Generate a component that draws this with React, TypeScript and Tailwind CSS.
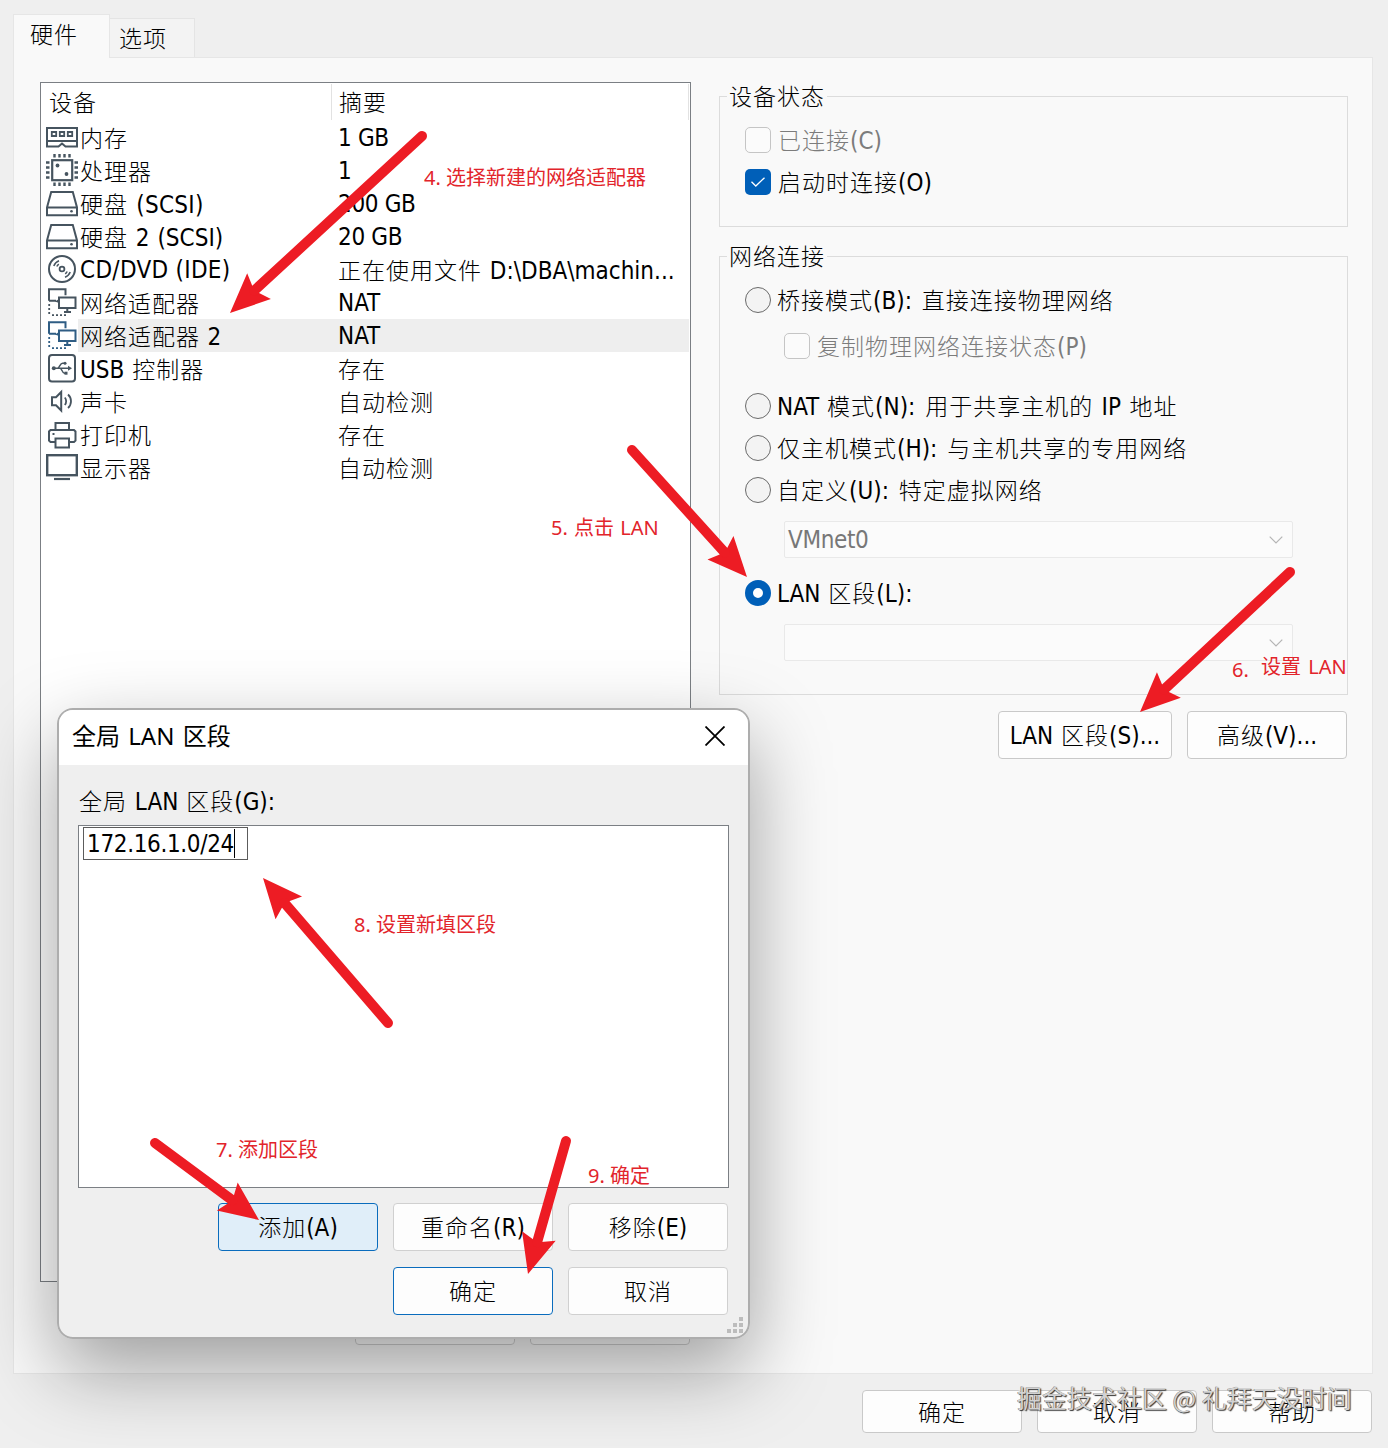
/* Hardware tab of the VM settings window, with the "global LAN segments"
   dialog open on top and the numbered tutorial arrows over everything. */

import type { ReactNode } from "react";
import clsx from "clsx";

// Latin runs: a serifed capital I is wide and digits are narrow in the system UI face
function tracking(run: string) {
  const digit = /\d/.test(run);
  const capI = /I/.test(run);
  if (capI && !digit) return "tracking-[0.3px]";
  if (digit && !capI) return "tracking-[-0.35px]";
  return "tracking-normal";
}

// spaces next to CJK are wider, most of all after a colon
function spacing(run: string) {
  return /: $/.test(run) ? "[word-spacing:3px]" : "[word-spacing:1px]";
}

/** UI label: CJK and Latin runs use different faces, so each run gets its own span. */
function T({ children, className }: { children: string; className?: string }) {
  const runs = children.split(/([\u4e00-\u9fff]+)/).filter(Boolean);
  return (
    <span className={clsx("inline-block pt-[2px] whitespace-pre", className)}>
      {runs.map((r, i) =>
        /[\u4e00-\u9fff]/.test(r) ? (
          <span key={i} className="font-['Noto_Sans_CJK_SC',sans-serif] text-[23px] font-light tracking-[1px]">{r}</span>
        ) : (
          <span key={i} className={clsx("font-['DejaVu_Sans_Condensed','DejaVu_Sans',sans-serif] text-[24px]", tracking(r), runs.length > 1 && spacing(r))}>{r}</span>
        )
      )}
    </span>
  );
}

/* ---------- device icons, 32x33 so they fill a row ---------- */

function Glyph({ children, className = "text-[#46545f]" }: { children: ReactNode; className?: string }) {
  return (
    <svg viewBox="0 0 32 33" className={clsx("h-[33px] w-8 shrink-0", className)} fill="none" stroke="currentColor" strokeWidth="2">
      {children}
    </svg>
  );
}

const MemoryIcon = () => (
  <Glyph>
    <path d="M1 7h30v18.500H19.500l-3.500-3-3.500 3H1zM1 20h30" />
    <path d="M5.800 11h4.400v4H5.800zM13.800 11h4.400v4h-4.400zM21.800 11h4.400v4h-4.400z" strokeWidth="1.800" />
  </Glyph>
);

const CpuIcon = () => (
  <Glyph>
    <rect x="6.200" y="6.200" width="20" height="20" strokeWidth="2.200" />
    <path d="M8.500 0v3.500M13.500 0v3.500M18.500 0v3.500M23.500 0v3.500M8.500 28.500V32M13.500 28.500V32M18.500 28.500V32M23.500 28.500V32M0 8.500h3.500M0 13.500h3.500M0 18.500h3.500M0 23.500h3.500M28.500 8.500H32M28.500 13.500H32M28.500 18.500H32M28.500 23.500H32" strokeWidth="2.400" />
    <g fill="currentColor" stroke="none"><circle cx="11.500" cy="11.500" r="1.900" /><circle cx="20.500" cy="20" r="1.900" /></g>
  </Glyph>
);

const DiskIcon = () => (
  <Glyph>
    <path d="M1 20.500 5.200 5h21.600L31 20.500v7.700H1zM1 20.500h30" />
    <circle cx="25.500" cy="24.200" r="1.300" fill="currentColor" stroke="none" />
  </Glyph>
);

const DiscIcon = () => (
  <Glyph>
    <circle cx="16" cy="16" r="13" />
    <circle cx="16" cy="16" r="2.400" strokeWidth="1.800" />
    <path d="M7.800 13a9 9 0 0 1 5.200-5.200M10.800 13.500a6 6 0 0 1 2-2.300M24.200 19a9 9 0 0 1-5.200 5.200M21.200 18.500a6 6 0 0 1-2 2.300" strokeWidth="1.500" />
  </Glyph>
);

const NetIcon = ({ selected = false }: { selected?: boolean }) => (
  <Glyph className={selected ? "text-[#2f5d84]" : undefined}>
    <path d="M3 14.800V3.200h16.500v6M3 14.800h7" />
    <rect x="13" y="11.500" width="16.500" height="10.500" />
    <path d="M21.300 22v4M18 26h7" />
    <path d="M9 15.500l4-2.500v4z" fill="currentColor" stroke="none" />
    <path d="M3.200 18v12M6 29.200h15" strokeDasharray="2 2" strokeWidth="1.800" />
  </Glyph>
);

const UsbIcon = () => (
  <Glyph>
    <rect x="3" y="3" width="26" height="26.500" rx="3" />
    <path d="M8 16.200h15M11.500 16.200c2 0 2.500-5 5-5h1.500M14 16.200c2 0 2 5 4.500 5h1" strokeWidth="1.500" />
    <g fill="currentColor" stroke="none"><circle cx="7.800" cy="16.200" r="2" /><path d="M22 13.700l4 2.500-4 2.500z" /><circle cx="19" cy="11.200" r="1.500" /><path d="M18.500 19.700h3v3h-3z" /></g>
  </Glyph>
);

const SoundIcon = () => (
  <Glyph>
    <path d="M6 12.200h4l5.200-5.200v18.500L10 20.300H6z" />
    <path d="M18.800 12.500c1.800 2 1.800 5.500 0 7.500M22 9.500c4 3.500 4 10 0 13.500" strokeWidth="1.800" />
  </Glyph>
);

const PrinterIcon = () => (
  <Glyph>
    <path d="M9.500 12V5h13.500v7M9 24H4.500L3 22.500v-9L4.500 12h23.500L29.500 13.500v9L28 24h-4.500" />
    <rect x="9.500" y="20.500" width="13.500" height="9" />
    <path d="M6.500 16h2" />
  </Glyph>
);

const DisplayIcon = () => (
  <Glyph>
    <rect x="1.200" y="4.200" width="29.600" height="20" strokeWidth="2.400" />
    <path d="M8 28h16" strokeWidth="2.200" />
  </Glyph>
);

const devices = [
  { icon: <MemoryIcon />, name: "内存", summary: "1 GB" },
  { icon: <CpuIcon />, name: "处理器", summary: "1" },
  { icon: <DiskIcon />, name: "硬盘 (SCSI)", summary: "200 GB" },
  { icon: <DiskIcon />, name: "硬盘 2 (SCSI)", summary: "20 GB" },
  { icon: <DiscIcon />, name: "CD/DVD (IDE)", summary: "正在使用文件 D:\\DBA\\machin..." },
  { icon: <NetIcon />, name: "网络适配器", summary: "NAT" },
  { icon: <NetIcon selected />, name: "网络适配器 2", summary: "NAT", active: true },
  { icon: <UsbIcon />, name: "USB 控制器", summary: "存在" },
  { icon: <SoundIcon />, name: "声卡", summary: "自动检测" },
  { icon: <PrinterIcon />, name: "打印机", summary: "存在" },
  { icon: <DisplayIcon />, name: "显示器", summary: "自动检测" },
];

/* ---------- form controls ---------- */

function Button({ children, className = "w-40 h-12 border-[#d0d0d0] bg-[#fdfdfd]" }: { children: string; className?: string }) {
  return (
    <button className={clsx("flex shrink-0 items-center justify-center rounded-[4px] border leading-6", className)}>
      <T>{children}</T>
    </button>
  );
}

function Check({ label, checked = false, className }: { label: string; checked?: boolean; className?: string }) {
  return (
    <label className={clsx("flex h-[42px] items-center", className)}>
      <span className={clsx("grid size-[26px] place-items-center rounded-[5px]", checked ? "bg-[#005fb8]" : "border-[1.5px] border-[#c5c5c5] bg-[#fbfbfb]")}>
        {checked && (
          <svg viewBox="0 0 14 10" className="h-[10px] w-[14px]" fill="none" stroke="#fff" strokeWidth="1.300"><path d="M.5 4.800 4.800 9 13.500.700" /></svg>
        )}
      </span>
      <T className={clsx("ml-[7px] leading-6", !checked && "text-[#7c7c7c]")}>{label}</T>
    </label>
  );
}

function Radio({ label, on = false }: { label: string; on?: boolean }) {
  return (
    <label className="flex h-[42px] items-center">
      <span className={clsx("size-[26px] rounded-full", on ? "border-8 border-[#005fb8] bg-white" : "border-[1.5px] border-[#6a6a6a] bg-[#f3f3f3]")} />
      <T className="ml-[6px] leading-6">{label}</T>
    </label>
  );
}

function Select({ value = "", className }: { value?: string; className?: string }) {
  return (
    <div className={clsx("ml-[39px] flex h-[37px] w-[509px] items-center justify-between rounded-[2px] border border-[#e9e9e9] bg-[#fbfbfb] pr-[9px] pl-[3px] text-[#777]", className)}>
      <T className="leading-6">{value}</T>
      <svg viewBox="0 0 14 8" className="h-2 w-[14px]" fill="none" stroke="#b5b5b5" strokeWidth="1.200"><path d="M.7.700 7 7 13.300.700" /></svg>
    </div>
  );
}

function Group({ title, children, className }: { title: string; children: ReactNode; className?: string }) {
  return (
    <fieldset className={clsx("w-[629px] border border-[#dcdcdc] pl-[25px]", className)}>
      <legend className="-ml-[18px] px-[2px]"><span className="flex h-6 items-center leading-6"><T>{title}</T></span></legend>
      {children}
    </fieldset>
  );
}

/* ---------- the LAN segment dialog ---------- */

const GRIP = [[12, 0], [6, 6], [12, 6], [0, 12], [6, 12], [12, 12]];

function LanDialog() {
  return (
    <div className="absolute top-[708px] left-[57px] flex h-[631px] w-[693px] flex-col overflow-hidden rounded-[16px] border-2 border-[#adadad] bg-[#efefef]">
      <div className="flex h-[55px] shrink-0 items-center justify-between bg-white pr-[23px] pb-[3px] pl-[13px]">
        <h2 className="font-['Noto_Sans','Noto_Sans_CJK_SC',sans-serif] text-[24px] leading-6 [word-spacing:2px]">全局 LAN 区段</h2>
        <svg viewBox="0 0 20 20" className="size-5" stroke="#000" strokeWidth="1.800"><path d="M.5.500l19 19M19.500.500l-19 19" /></svg>
      </div>
      <div className="px-[19px] pt-[21px]">
        <div className="flex h-[26px] pl-px leading-6"><T>全局 LAN 区段(G):</T></div>
        <div className="mt-[13px] h-[363px] w-[651px] border border-[#7b7f84] bg-white pt-px pl-1">
          <div className="flex h-[33px] w-[165px] items-center border border-[#5c5c5c] pl-[3px]">
            <T className="leading-6">172.16.1.0/24</T>
            <span className="h-[29px] w-px bg-black" />
          </div>
        </div>
        <div className="mt-[15px] flex w-[650px] flex-wrap justify-end gap-x-[15px] gap-y-4">
          <Button className="h-12 w-40 border-[#0a6cbd] bg-[#e0eef9]">添加(A)</Button>
          <Button>重命名(R)</Button>
          <Button>移除(E)</Button>
          <Button className="h-12 w-40 border-[#0a6cbd] bg-[#fdfdfd]">确定</Button>
          <Button>取消</Button>
        </div>
      </div>
      <svg viewBox="0 0 16 16" className="absolute right-[5px] bottom-[4px] size-4" fill="#bcbcbc">
        {GRIP.map(([x, y]) => <rect key={`${x}-${y}`} x={x} y={y} width="4" height="4" />)}
      </svg>
    </div>
  );
}

/* ---------- tutorial annotations ---------- */

// tail -> tip
const arrows = [
  [422, 136, 230, 313],
  [632, 450, 747, 577],
  [1290, 572, 1140, 712],
  [388, 1023, 263, 878],
  [155, 1143, 259, 1220],
  [566, 1141, 528, 1274],
];

function Arrows() {
  return (
    <svg viewBox="0 0 1388 1448" className="pointer-events-none absolute inset-0 h-[1448px] w-[1388px]" fill="#ed1c24">
      {arrows.map(([x1, y1, x2, y2]) => {
        const len = Math.hypot(x2 - x1, y2 - y1);
        const deg = (Math.atan2(y2 - y1, x2 - x1) * 180) / Math.PI;
        return (
          <g key={`${x1}-${y1}`} transform={`translate(${x2} ${y2}) rotate(${deg})`}>
            <path d="M0 0L-39.500-17.500-34.500-4v8L-39.500 17.500z" />
            <path d={`M-33 0H${-len}`} stroke="#ed1c24" strokeWidth="10" strokeLinecap="round" />
          </g>
        );
      })}
    </svg>
  );
}

function Note({ children, className }: { children: ReactNode; className: string }) {
  return (
    <span className={clsx("absolute font-['Noto_Sans','Noto_Sans_CJK_SC',sans-serif] text-[20px] leading-6 whitespace-pre text-[#e2242b]", className)}>{children}</span>
  );
}

export default function App() {
  return (
    <div className="relative flex h-[1448px] w-[1388px] flex-col overflow-hidden bg-[#efefef] text-black">
      <div className="flex h-[57px] shrink-0 items-end pl-[13px]">
        <div className="relative z-10 -mb-px h-[44px] w-[97px] border border-b-0 border-[#e6e6e6] bg-[#f9f9f9] pt-[4px] pl-[16px] leading-6"><T>硬件</T></div>
        <div className="h-[39px] w-[85px] border border-b-0 border-l-0 border-[#e4e4e4] bg-[#f3f3f3] pt-[4px] pl-[9px] leading-6"><T>选项</T></div>
      </div>

      <div className="ml-[13px] flex h-[1317px] w-[1360px] shrink-0 border border-[#e6e6e6] bg-[#f9f9f9] pt-6 pl-[26px]">
        {/* device list */}
        <div className="flex w-[651px] flex-col">
          <div className="h-[1200px] border border-[#7b7f84] bg-white">
            <div className="flex h-[38px] pr-px">
              <div className="my-px w-[291px] border-r border-[#e2e2e2] pt-[3px] pl-[8px] leading-6"><T>设备</T></div>
              <div className="my-px flex-1 border-r border-[#e2e2e2] pt-[3px] pl-[7px] leading-6"><T>摘要</T></div>
            </div>
            {devices.map((d, i) => (
              <div key={i} className="flex h-[33px] items-center pr-px pl-[5px]">
                {d.icon}
                <div className={clsx("flex h-full flex-1 items-center pl-[2px] leading-6", d.active && "bg-[#eee]")}>
                  <T className="w-[258px]">{d.name}</T>
                  <T>{d.summary}</T>
                </div>
              </div>
            ))}
          </div>
          <div className="mt-[15px] flex justify-end gap-[15px] pr-px">
            <Button>添加(A)...</Button>
            <Button>移除(R)</Button>
          </div>
        </div>

        {/* adapter settings */}
        <div className="ml-7 w-[629px] pt-[2px]">
          <Group title="设备状态" className="h-[143px]">
            <div className="pt-[11px]">
              <Check label="已连接(C)" />
              <Check label="启动时连接(O)" checked />
            </div>
          </Group>
          <Group title="网络连接" className="mt-[17px] h-[451px]">
            <div className="pt-[11px]">
              <Radio label="桥接模式(B): 直接连接物理网络" />
              <Check label="复制物理网络连接状态(P)" className="mt-1 ml-[39px]" />
              <div className="h-[18px]" />
              <Radio label="NAT 模式(N): 用于共享主机的 IP 地址" />
              <Radio label="仅主机模式(H): 与主机共享的专用网络" />
              <Radio label="自定义(U): 特定虚拟网络" />
              <Select value="VMnet0" className="mt-[10px]" />
              <div className="h-[14px]" />
              <Radio label="LAN 区段(L):" on />
              <Select className="mt-[10px]" />
            </div>
          </Group>
          <div className="mt-4 flex justify-end gap-[15px] pr-px">
            <Button className="h-12 w-[174px] border-[#c9c9c9] bg-[#fdfdfd]">LAN 区段(S)...</Button>
            <Button className="h-12 w-40 border-[#c9c9c9] bg-[#fdfdfd]">高级(V)...</Button>
          </div>
        </div>
      </div>

      <div className="mt-4 flex justify-end gap-[15px] pr-4">
        <Button className="h-[43px] w-40 border-[#c9c9c9] bg-[#fdfdfd]">确定</Button>
        <Button className="h-[43px] w-40 border-[#c9c9c9] bg-[#fdfdfd]">取消</Button>
        <Button className="h-[43px] w-40 border-[#c9c9c9] bg-[#fdfdfd]">帮助</Button>
      </div>

      {/* the dialog's drop shadow falls on the window below it */}
      <div className="absolute top-[708px] left-[57px] h-[631px] w-[693px] rounded-[16px] shadow-[0_30px_80px_rgba(0,0,0,0.37)]" />
      <LanDialog />

      <Note className="top-[166px] left-[424px]">4. 选择新建的网络适配器</Note>
      <Note className="top-[516px] left-[551px] [word-spacing:1px]">5. 点击 LAN</Note>
      <Note className="top-[658px] left-[1232px]">6.</Note>
      <Note className="top-[655px] left-[1261px] [word-spacing:2px]">设置 LAN</Note>
      <Note className="top-[1138px] left-[216px]">7. 添加区段</Note>
      <Note className="top-[913px] left-[354px]">8. 设置新填区段</Note>
      <Note className="top-[1164px] left-[588px]">9. 确定</Note>
      <Arrows />

      <span className="absolute top-[1385px] left-[1017px] font-['Noto_Sans_CJK_SC',sans-serif] text-[25px] leading-6 whitespace-pre text-[#d2d2d2] [text-shadow:1px_1px_1px_#333,-0.5px_-0.5px_0.5px_#777]">掘金技术社区 @ 礼拜天没时间</span>
    </div>
  );
}
